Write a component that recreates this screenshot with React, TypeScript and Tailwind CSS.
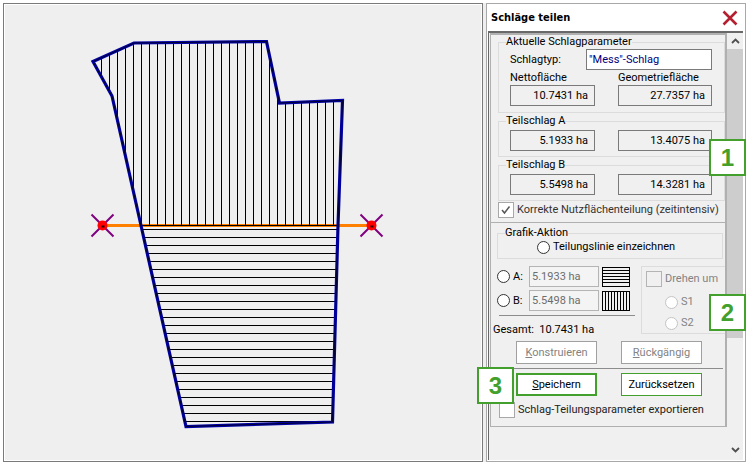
import type { InputHTMLAttributes, ReactNode } from "react";

const range = (start: number, end: number, step: number) =>
  Array.from({ length: Math.floor((end - start) / step) + 1 }, (_, i) => start + i * step);

const FIELD_A = "88,56.5 129,38 261.5,36.5 274.5,98 337.5,95.5 333,220.5 136,220.5 107,91";
const FIELD_B = "136,220.5 333,220.5 327.5,417 181,421.5";
const OUTLINE = "88,56.5 129,38 261.5,36.5 274.5,98 337.5,95.5 333,220.5 327.5,417 181,421.5 136,220.5 107,91";

function Marker({ x, y }: { x: number; y: number }) {
  return (
    <g transform={`translate(${x} ${y})`}>
      <path d="M-11 -11L11 11M11 -11L-11 11" stroke="#800080" strokeWidth="2" />
      <circle r="5" fill="#ff0000" />
      <path d="M-1 0h3v2h-3z" fill="#300000" />
    </g>
  );
}

function FieldMap() {
  return (
    <svg viewBox="0 0 476 455" className="block h-full w-full" role="img" aria-label="Schlag">
      <defs>
        <clipPath id="part-a">
          <polygon points={FIELD_A} />
        </clipPath>
        <clipPath id="part-b">
          <polygon points={FIELD_B} />
        </clipPath>
      </defs>
      <path d="M98 220.5H366" stroke="#ff8000" strokeWidth="3" />
      <g clipPath="url(#part-a)" stroke="#000">
        {range(96.5, 336, 8).map((x) => (
          <path key={x} d={`M${x} 30V221`} />
        ))}
      </g>
      <g clipPath="url(#part-b)" stroke="#000">
        {range(224.5, 420, 8).map((y) => (
          <path key={y} d={`M130 ${y}H335`} />
        ))}
      </g>
      <path d="M136 220.5H333" stroke="#000" />
      <polygon points={OUTLINE} fill="none" stroke="#0000a4" strokeWidth="3.2" />
      <polygon points={OUTLINE} fill="none" stroke="#000030" strokeWidth="1" />
      <Marker x={97.5} y={220.5} />
      <Marker x={366.5} y={220.5} />
    </svg>
  );
}

function Group({ title, className = "", children }: { title: string; className?: string; children: ReactNode }) {
  return (
    <fieldset className={`min-w-0 border border-[#dcdcdc] ${className}`}>
      <legend className="ml-[7px] h-[14px] leading-[14px]">{title}</legend>
      {children}
    </fieldset>
  );
}

function Value({ label, value }: { label: string; value: string }) {
  return (
    <input
      aria-label={label}
      readOnly
      defaultValue={value}
      className="h-[21px] w-full min-w-0 border border-[#7a7a7a] bg-[#f0f0f0] px-[6px] text-right outline-none"
    />
  );
}

function Radio({ label, disabled }: { label: string; disabled?: boolean }) {
  return (
    <label className={`flex items-center gap-[3px] ${disabled ? "text-[#838383]" : ""}`}>
      <input
        type="radio"
        name="aktion"
        disabled={disabled}
        className="size-[13px] shrink-0 appearance-none rounded-full border border-[#333] bg-white disabled:border-[#c4c4c4]"
      />
      {label}
    </label>
  );
}

function Check({ label, className = "", boxClass, ...rest }: { label: string; boxClass: string } & InputHTMLAttributes<HTMLInputElement>) {
  return (
    <label className={`flex items-center gap-[3px] whitespace-nowrap ${className}`}>
      <span className="grid shrink-0">
        <input
          type="checkbox"
          {...rest}
          className={`peer col-start-1 row-start-1 size-4 appearance-none border ${boxClass}`}
        />
        <svg viewBox="0 0 16 16" className="invisible col-start-1 row-start-1 size-4 peer-checked:visible" aria-hidden="true">
          <path d="M4 8L6.5 11L11.5 4.5" fill="none" stroke="#555" strokeWidth="1.5" />
        </svg>
      </span>
      {label}
    </label>
  );
}

function Hatch({ vertical }: { vertical?: boolean }) {
  return (
    <svg viewBox="0 0 28 20" className="h-5 w-7 shrink-0" aria-hidden="true">
      <rect x="0.5" y="0.5" width="27" height="19" fill="#f0f0f0" stroke="#000" />
      <path
        d={vertical
          ? "M3.5 0V20M6.5 0V20M9.5 0V20M12.5 0V20M15.5 0V20M18.5 0V20M21.5 0V20M24.5 0V20"
          : "M0 3.5H28M0 6.5H28M0 9.5H28M0 12.5H28M0 15.5H28"}
        stroke="#000"
      />
    </svg>
  );
}

function PartRow({ label, value, vertical }: { label: string; value: string; vertical?: boolean }) {
  return (
    <div className="flex items-center gap-[3px]">
      <div className="w-[29px]">
        <Radio label={label} />
      </div>
      <input
        aria-label={`Fläche ${label}`}
        disabled
        defaultValue={value}
        className="h-[21px] w-[70px] border border-[#b4b4b4] bg-[#f4f4f4] px-[2px] text-[#6d6d6d]"
      />
      <Hatch vertical={vertical} />
    </div>
  );
}

function Action({ hotkey, label, className, disabled }: { hotkey?: string; label: string; className: string; disabled?: boolean }) {
  return (
    <button type="button" disabled={disabled} className={`h-[23px] w-[81px] bg-white text-center ${className}`}>
      {hotkey && <span className="underline">{hotkey}</span>}
      {label}
    </button>
  );
}

function Badge({ n, className }: { n: number; className: string }) {
  return (
    <div
      className={`absolute grid size-[37px] place-items-center border-2 border-[#43a02c] bg-white font-['Liberation_Sans',sans-serif] text-[24px] leading-none font-bold text-[#43a02c] ${className}`}
    >
      {n}
    </div>
  );
}

export default function App() {
  return (
    <main className="flex min-h-screen bg-white p-[3px] pb-1 font-[Roboto,'Liberation_Sans',sans-serif] text-[11px] leading-[14px] text-black">
      <section className="min-w-0 flex-1 border border-[#7a7a7a]">
        <div className="h-full border border-white bg-[#efefef]">
          <FieldMap />
        </div>
      </section>
      <div className="w-[3px] shrink-0 bg-[#efefef]" />

      <aside className="relative flex w-[260px] shrink-0 flex-col border border-[#a8a8a8] bg-white">
        <header className="flex h-[27px] items-center justify-between pr-[7px] pl-1">
          <h1 className="font-['DejaVu_Sans_Condensed','DejaVu_Sans',sans-serif] text-[11px] font-bold">Schläge teilen</h1>
          <button type="button" aria-label="Schließen">
            <svg viewBox="0 0 16 16" className="size-4" aria-hidden="true">
              <path d="M1.5 1.5L14.5 14.5M14.5 1.5L1.5 14.5" stroke="#b4202f" strokeWidth="2.6" />
            </svg>
          </button>
        </header>

        <div className="mr-[2px] mb-px ml-px flex flex-1 border-t-2 border-l border-[#696969] bg-[#f0f0f0]">
          <form className="flex min-w-0 flex-1 flex-col pl-px">
            <div className="flex flex-col border-t-2 border-r-2 border-b border-l border-[#b0b0b0] pb-1 pl-[7px]">
              <Group title="Aktuelle Schlagparameter" className="h-[78px]">
                <div className="pr-3 pl-[11px]">
                  <label className="flex items-center justify-between">
                    Schlagtyp:
                    <input
                      defaultValue={'"Mess"-Schlag'}
                      className="h-[21px] w-[126px] border border-[#7a7a7a] bg-white px-[2px] text-[#000080]"
                    />
                  </label>
                  <div className="grid grid-cols-[85px_1fr] gap-x-[23px] pt-px">
                    <span>Nettofläche</span>
                    <span>Geometriefläche</span>
                    <Value label="Nettofläche" value="10.7431 ha" />
                    <Value label="Geometriefläche" value="27.7357 ha" />
                  </div>
                </div>
              </Group>
              <Group title="Teilschlag A" className="mt-px h-[43px]">
                <div className="grid grid-cols-[85px_1fr] gap-x-[23px] pt-[2px] pr-3 pl-[11px]">
                  <Value label="Nettofläche A" value="5.1933 ha" />
                  <Value label="Geometriefläche A" value="13.4075 ha" />
                </div>
              </Group>
              <Group title="Teilschlag B" className="mt-px h-[43px]">
                <div className="grid grid-cols-[85px_1fr] gap-x-[23px] pt-[2px] pr-3 pl-[11px]">
                  <Value label="Nettofläche B" value="5.5498 ha" />
                  <Value label="Geometriefläche B" value="14.3281 ha" />
                </div>
              </Group>
              <Check
                label="Korrekte Nutzflächenteilung (zeitintensiv)"
                defaultChecked
                className="mt-px text-[#333]"
                boxClass="border-[#a8a8a8] bg-white"
              />
            </div>

            <div className="flex flex-col border-r-2 border-b border-l border-[#b0b0b0] pt-[3px] pb-2">
              <Group title="Grafik-Aktion" className="mr-[2px] ml-[6px] h-[33px]">
                <div className="flex pl-[39px]">
                  <Radio label="Teilungslinie einzeichnen" />
                </div>
              </Group>

              <div className="flex justify-between pt-[7px]">
                <div className="flex w-[144px] flex-col">
                  <div className="flex flex-col gap-[3px] pl-[6px]">
                    <PartRow label="A:" value="5.1933 ha" />
                    <PartRow label="B:" value="5.5498 ha" vertical />
                  </div>
                  <hr className="mt-1 ml-2 border-[#8c8c8c]" />
                  <p className="mt-[7px] pl-[2px] whitespace-pre">{"Gesamt:  10.7431 ha"}</p>
                </div>
                <fieldset aria-label="Drehen" className="flex h-[68px] w-[84px] flex-col border border-r-0 border-[#dcdcdc] pt-1 pl-1">
                  <Check label="Drehen um" disabled className="text-[#838383]" boxClass="border-[#b4b4b4] bg-[#f0f0f0]" />
                  <div className="flex flex-col gap-[7px] pt-2 pl-[19px]">
                    <Radio label="S1" disabled />
                    <Radio label="S2" disabled />
                  </div>
                </fieldset>
              </div>

              <div className="mt-1 flex gap-6 pl-[25px]">
                <Action hotkey="K" label="onstruieren" disabled className="border border-[#a0a0a0] text-[#838383]" />
                <Action hotkey="R" label="ückgängig" disabled className="border border-[#a0a0a0] text-[#838383]" />
              </div>
              <hr className="mt-1 mr-[2px] border-[#8c8c8c]" />
              <div className="mt-1 flex gap-6 pl-[25px]">
                <Action hotkey="S" label="peichern" className="border-2 border-[#43a02c]" />
                <Action label="Zurücksetzen" className="border border-[#43a02c]" />
              </div>
              <Check
                label="Schlag-Teilungsparameter exportieren"
                className="mt-[6px] pl-2 text-[#222]"
                boxClass="border-[#a8a8a8] bg-white"
              />
            </div>
          </form>

          <div className="flex w-4 shrink-0 flex-col bg-[#f0f0f0]">
            <button type="button" aria-label="Nach oben" className="flex h-4 items-center justify-center">
              <svg viewBox="0 0 9 6" className="h-[6px] w-[9px]" aria-hidden="true">
                <path d="M1 5L4.5 1.5L8 5" fill="none" stroke="#505050" strokeWidth="1.8" />
              </svg>
            </button>
            <div className="flex-1">
              <div className="h-[74%] bg-[#cdcdcd]" />
            </div>
            <button type="button" aria-label="Nach unten" className="flex h-5 items-center justify-center">
              <svg viewBox="0 0 9 6" className="h-[6px] w-[9px]" aria-hidden="true">
                <path d="M1 1L4.5 4.5L8 1" fill="none" stroke="#505050" strokeWidth="1.8" />
              </svg>
            </button>
          </div>
        </div>

        <Badge n={1} className="top-[135px] -right-px" />
        <Badge n={2} className="top-[290px] -right-px" />
        <Badge n={3} className="top-[363px] -left-[10px]" />
      </aside>
    </main>
  );
}
